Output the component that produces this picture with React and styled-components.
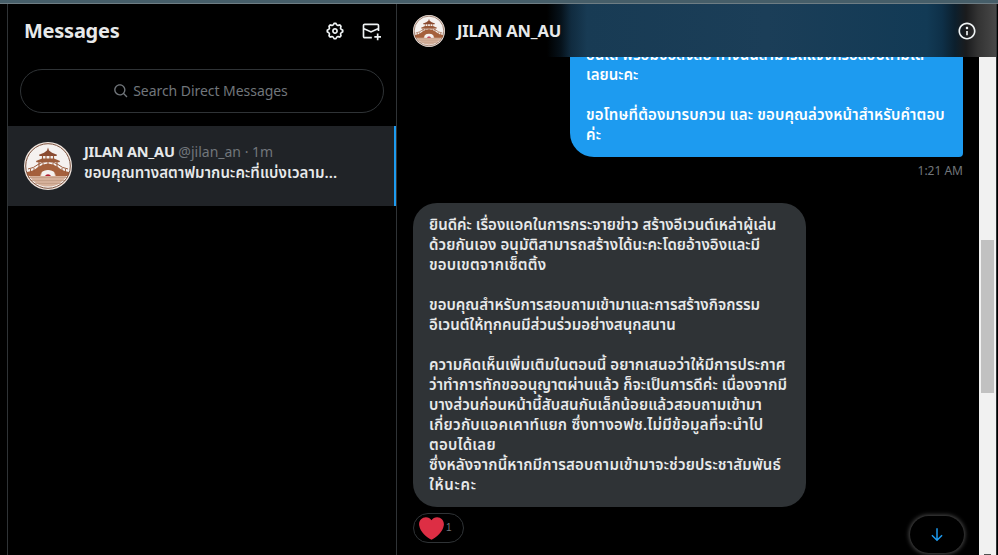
import React from "react";
import styled, { createGlobalStyle } from "styled-components";

const GlobalStyle = createGlobalStyle`
  * {
    box-sizing: border-box;
  }
  body {
    margin: 0;
    background: #000;
    color: #e7e9ea;
    font-family: "Noto Sans", "Noto Sans Thai", "Open Sans", sans-serif;
    font-size: 14px;
    line-height: 20px;
    overflow: hidden;
  }
`;

const Page = styled.div`
  width: 998px;
  height: 555px;
  display: flex;
  flex-direction: column;
  background: #000;
`;

const TopStrip = styled.div`
  height: 4px;
  flex-shrink: 0;
  background: #465e69;
  border-bottom: 1px solid #6e7d84;
`;

const Columns = styled.div`
  flex: 1;
  min-height: 0;
  display: flex;
  padding-left: 7px;
`;

const Sidebar = styled.aside`
  width: 390px;
  flex-shrink: 0;
  display: flex;
  flex-direction: column;
  border-left: 1px solid #2f3336;
  border-right: 1px solid #2f3336;
`;

const SidebarHeader = styled.header`
  height: 53px;
  display: flex;
  align-items: center;
  padding: 0 15px 0 16px;
`;

const Heading = styled.h2`
  flex: 1;
  margin: 0;
  font-size: ${({ $size }) => $size || 20}px;
  line-height: 24px;
  font-weight: 700;
  letter-spacing: ${({ $spacing }) => $spacing || 0}px;
`;

const HeaderIcons = styled.div`
  display: flex;
  gap: 16px;
`;

const Icon = styled.svg`
  width: ${({ $size }) => $size || 20}px;
  height: ${({ $size }) => $size || 20}px;
  flex-shrink: 0;
  display: block;
  fill: ${({ $color }) => $color || "#eff3f4"};
`;

const SearchBox = styled.div`
  height: 44px;
  margin: 12px 12px 13px 12px;
  display: flex;
  align-items: center;
  justify-content: center;
  gap: 4px;
  padding-right: 3px;
  border: 1px solid #2f3336;
  border-radius: 22px;
  letter-spacing: -0.05px;
  color: #71767b;
`;

const Conversation = styled.div`
  height: 80px;
  display: flex;
  gap: 12px;
  padding: 16px;
  background: #202327;
  border-right: 2px solid #1d9bf0;
`;

const ConversationText = styled.div`
  min-width: 0;
  margin-top: -1px;
  white-space: nowrap;
`;

const Name = styled.span`
  font-size: 14.5px;
  font-weight: 700;
  letter-spacing: -0.2px;
`;

const Muted = styled.span`
  color: #71767b;
`;

const Preview = styled.div`
  font-size: 15px;
  font-weight: 600;
  letter-spacing: 0.1px;
`;

const Chat = styled.main`
  flex: 1;
  min-width: 0;
  position: relative;
  display: flex;
  border-right: 1px solid #2f3336;
  margin-right: 1px;
`;

const ChatHeader = styled.header`
  position: absolute;
  top: 0;
  left: 0;
  right: 0;
  height: 53px;
  display: flex;
  align-items: center;
  gap: 12px;
  padding: 0 19px 0 16px;
  background: linear-gradient(
    90deg,
    #000 150px,
    #06121b 164px,
    #102b3f 174px,
    #183b54 190px,
    #1b3e58 370px,
    #123a55 530px,
    #0e3048 545px,
    #0c1f2d 558px,
    #1a1b1d 569px,
    #333 581px,
    #484848 599px
  );
`;

const Thread = styled.div`
  flex: 1;
  min-width: 0;
  overflow: hidden;
  display: flex;
  flex-direction: column;
  justify-content: flex-end;
  padding: 0 16px 12px;
`;

const Bubble = styled.div`
  width: 393px;
  flex-shrink: 0;
  align-self: ${({ $own }) => ($own ? "flex-end" : "flex-start")};
  padding: 11px 16px 13px;
  border-radius: ${({ $own }) => ($own ? "24px 24px 4px 24px" : "24px")};
  background: ${({ $own }) => ($own ? "#1d9bf0" : "#2f3336")};
  color: ${({ $own }) => ($own ? "#fff" : "#e7e9ea")};
  font-size: 15px;
  font-weight: 600;
`;

const Line = styled.div`
  height: 20px;
  white-space: nowrap;
  letter-spacing: ${({ $spacing }) => $spacing || 0}px;
`;

const Time = styled.div`
  flex-shrink: 0;
  height: 20px;
  margin: 4px 0 22px;
  text-align: right;
  font-size: 12px;
  color: #71767b;
`;

const Reaction = styled.div`
  flex-shrink: 0;
  width: 51px;
  height: 30px;
  margin-top: 6px;
  display: flex;
  align-items: center;
  gap: 2px;
  padding-left: 5px;
  border: 1px solid #2f3336;
  border-radius: 15px;
  font-family: "Liberation Sans", sans-serif;
  font-size: 10px;
  color: #71767b;
`;

const JumpButton = styled.button`
  position: absolute;
  right: 32px;
  bottom: 2px;
  width: 54px;
  height: 37px;
  padding: 0;
  display: flex;
  align-items: center;
  justify-content: center;
  border: none;
  border-radius: 19px;
  background: #000;
  box-shadow: 0 0 4px 1px rgba(255, 255, 255, 0.3);
`;

const ScrollTrack = styled.div`
  width: 17px;
  display: flex;
  flex-direction: column;
  justify-content: space-between;
  align-items: center;
  padding-top: 236px;
  background: #f1f1f1;
`;

const ScrollThumb = styled.div`
  width: 13px;
  height: 153px;
  background: #c1c1c1;
`;

const ScrollArrow = styled.div`
  width: 7px;
  height: 1px;
  background: #505050;
`;

const Avatar = ({ size }) => (
  <Icon $size={size} viewBox="0 0 48 48">
    <circle cx="24" cy="24" r="24" fill="#f0e6df" />
    <circle cx="24" cy="24" r="22" fill="#f5f1ef" />
    <path d="M4 31h40a21.500 21.500 0 0 1-40 0z" fill="#d5b09a" />
    <path d="M4.500 35.500h39M6.500 38.500h35M10 41.500h28" stroke="#bf9a84" strokeWidth=".8" />
    <path d="M3 33v-3q7-1 11-5 10-7 20 0 4 4 11 5v3l-2 1H32q-1-6-8-6t-8 6H5z" fill="#a5603c" />
    <path d="M4 27q6-1 10-4.500 10-6.500 20 0 4 3.500 10 4.500" fill="none" stroke="#9a5a3a" strokeWidth="1" />
    <path d="M6.500 27v4M10 26v4M38 26v4M41.500 27v4M19 21v3M24 20v3M29 21v3" stroke="#9a5a3a" strokeWidth=".9" />
    <path d="M17 34a7 5.500 0 0 1 14 0z" fill="#f5f1ef" />
    <path d="M21 34a3.200 2.600 0 0 1 6 0z" fill="#b01c30" />
    <path d="M24 5.500l1 3 3 2.200 5 2-.5 1.300h-17l-.5-1.300 5-2 3-2.200z" fill="#8a4a30" />
    <path d="M18 16.500h12l6 2.500-.5 1.200h-23L12 19z" fill="#9a5a3a" />
    <path d="M18.500 13.500v3.500M22 13.500v3.500M26 13.500v3.500M29.500 13.500v3.500M15 20v5M33 20v5" stroke="#9a5a3a" strokeWidth="1.100" />
    <circle cx="24" cy="24" r="22.300" fill="none" stroke="#7d5340" strokeWidth="1" />
  </Icon>
);

// the first rows sit above the visible part of the thread
const ownLines = [
  { text: "" },
  { text: "" },
  { text: "" },
  { text: "อื่นใด พร้อมข้อสงสัย ทางนั้นสามารถแจ้งหรือสอบถามได้" },
  { text: "เลยนะคะ" },
  { text: "" },
  { text: "ขอโทษที่ต้องมารบกวน และ ขอบคุณล่วงหน้าสำหรับคำตอบ", spacing: 0.14 },
  { text: "ค่ะ", spacing: 0.2 },
];

const replyLines = [
  { text: "ยินดีค่ะ เรื่องแอคในการกระจายข่าว สร้างอีเวนต์เหล่าผู้เล่น" },
  { text: "ด้วยกันเอง อนุมัติสามารถสร้างได้นะคะโดยอ้างอิงและมี", spacing: 0.08 },
  { text: "ขอบเขตจากเซ็ตติ้ง", spacing: 0.2 },
  { text: "" },
  { text: "ขอบคุณสำหรับการสอบถามเข้ามาและการสร้างกิจกรรม" },
  { text: "อีเวนต์ให้ทุกคนมีส่วนร่วมอย่างสนุกสนาน" },
  { text: "" },
  { text: "ความคิดเห็นเพิ่มเติมในตอนนี้ อยากเสนอว่าให้มีการประกาศ", spacing: 0.07 },
  { text: "ว่าทำการทักขออนุญาตผ่านแล้ว ก็จะเป็นการดีค่ะ เนื่องจากมี", spacing: 0.07 },
  { text: "บางส่วนก่อนหน้านี้สับสนกันเล็กน้อยแล้วสอบถามเข้ามา", spacing: 0.06 },
  { text: "เกี่ยวกับแอคเคาท์แยก ซึ่งทางอฟช.ไม่มีข้อมูลที่จะนำไป", spacing: 0.26 },
  { text: "ตอบได้เลย", spacing: 0.25 },
  { text: "ซึ่งหลังจากนี้หากมีการสอบถามเข้ามาจะช่วยประชาสัมพันธ์", spacing: 0.17 },
  { text: "ให้นะคะ", spacing: 0.7 },
];

const Message = ({ lines, own }) => (
  <Bubble $own={own}>
    {lines.map((line, index) => (
      <Line key={index} $spacing={line.spacing}>
        {line.text}
      </Line>
    ))}
  </Bubble>
);

const App = () => {
  return (
    <>
      <GlobalStyle />
      <Page>
        <TopStrip />
        <Columns>
          <Sidebar>
            <SidebarHeader>
              <Heading $spacing={-0.25}>Messages</Heading>
              <HeaderIcons>
                <Icon viewBox="0 0 24 24">
                  <path d="M10.540 1.750h2.920l1.570 2.360c.110.170.320.250.530.210l2.530-.590 2.170 2.170-.580 2.540c-.050.200.040.410.210.530l2.360 1.570v2.920l-2.360 1.570c-.170.120-.260.330-.210.530l.580 2.540-2.170 2.170-2.530-.590c-.210-.040-.420.040-.530.210l-1.570 2.360h-2.920l-1.580-2.360c-.110-.170-.320-.250-.520-.210l-2.540.590-2.170-2.170.580-2.540c.050-.200-.030-.410-.210-.530l-2.350-1.570v-2.920L4.100 8.970c.180-.120.260-.330.210-.530L3.730 5.900 5.900 3.730l2.540.590c.200.040.410-.040.520-.210l1.580-2.360zm1.070 2l-.980 1.470C10.050 6.080 9 6.500 7.990 6.270l-1.460-.340-.600.600.330 1.460c.240 1.010-.180 2.070-1.050 2.640l-1.460.980v.780l1.460.980c.870.570 1.290 1.630 1.050 2.640l-.330 1.460.600.600 1.460-.340c1.010-.230 2.060.190 2.640 1.050l.980 1.470h.780l.970-1.470c.580-.860 1.630-1.280 2.650-1.050l1.450.340.610-.600-.340-1.460c-.230-1.010.180-2.070 1.050-2.640l1.470-.980v-.780l-1.470-.980c-.870-.570-1.280-1.630-1.050-2.640l.340-1.460-.610-.600-1.450.340c-1.020.230-2.070-.190-2.650-1.050l-.970-1.470h-.780zM12 10.500c-.830 0-1.500.670-1.500 1.500s.670 1.500 1.500 1.500c.820 0 1.500-.670 1.500-1.500s-.680-1.500-1.500-1.500zM8.500 12c0-1.930 1.560-3.500 3.500-3.500 1.930 0 3.500 1.570 3.500 3.500s-1.570 3.500-3.500 3.500c-1.940 0-3.500-1.570-3.500-3.500z" />
                </Icon>
                <Icon viewBox="0 0 24 24">
                  <path d="M1.998 5.500c0-1.381 1.119-2.500 2.500-2.500h15c1.381 0 2.500 1.119 2.500 2.500V12h-2v-1.537l-8 3.635-8-3.635V18.500c0 .276.224.500.500.500H13v2H4.498c-1.381 0-2.500-1.119-2.500-2.500v-13zm2 2.766l8 3.635 8-3.635V5.500c0-.276-.224-.500-.500-.500h-15c-.276 0-.500.224-.500.500v2.766zM19 18v-3h2v3h3v2h-3v3h-2v-3h-3v-2h3z" />
                </Icon>
              </HeaderIcons>
            </SidebarHeader>
            <SearchBox>
              <Icon $size={16} $color="#71767b" viewBox="0 0 24 24">
                <path d="M10.250 3.750c-3.590 0-6.500 2.910-6.500 6.500s2.910 6.500 6.500 6.500c1.795 0 3.419-.726 4.596-1.904 1.178-1.177 1.904-2.801 1.904-4.596 0-3.590-2.910-6.500-6.500-6.500zm-8.500 6.500c0-4.694 3.806-8.500 8.500-8.500s8.500 3.806 8.500 8.500c0 1.986-.682 3.815-1.824 5.262l4.781 4.781-1.414 1.414-4.781-4.781c-1.447 1.142-3.276 1.824-5.262 1.824-4.694 0-8.500-3.806-8.500-8.500z" />
              </Icon>
              Search Direct Messages
            </SearchBox>
            <Conversation>
              <Avatar size={48} />
              <ConversationText>
                <Name>JILAN AN_AU</Name> <Muted>@jilan_an · 1m</Muted>
                <Preview>ขอบคุณทางสตาฟมากนะคะที่แบ่งเวลาม...</Preview>
              </ConversationText>
            </Conversation>
          </Sidebar>
          <Chat>
            <Thread>
              <Message own lines={ownLines} />
              <Time>1:21 AM</Time>
              <Message lines={replyLines} />
              <Reaction>
                <Icon $size={25} $color="#dd2e44" viewBox="0 0 36 36">
                  <path d="M35.885 11.833c0-5.450-4.418-9.868-9.867-9.868-3.308 0-6.227 1.633-8.018 4.129-1.791-2.496-4.710-4.129-8.017-4.129-5.450 0-9.868 4.417-9.868 9.868 0 .772.098 1.520.266 2.241C1.751 22.587 11.216 31.568 18 34.034c6.783-2.466 16.249-11.447 17.617-19.959.170-.721.268-1.469.268-2.242z" />
                </Icon>
                1
              </Reaction>
            </Thread>
            <ScrollTrack>
              <ScrollThumb />
              <ScrollArrow />
            </ScrollTrack>
            <ChatHeader>
              <Avatar size={32} />
              <Heading as="h3" $size={16.5} $spacing={-0.15}>
                JILAN AN_AU
              </Heading>
              <Icon viewBox="0 0 24 24">
                <path d="M13.500 8.500c0 .830-.670 1.500-1.500 1.500s-1.500-.670-1.500-1.500S11.170 7 12 7s1.500.670 1.500 1.500zM13 17v-5h-2v5h2zm-1 5.250c5.660 0 10.250-4.590 10.250-10.250S17.660 1.750 12 1.750 1.750 6.340 1.750 12 6.340 22.250 12 22.250zM20.250 12c0 4.560-3.690 8.250-8.250 8.250S3.750 16.560 3.750 12 7.440 3.750 12 3.750s8.250 3.690 8.250 8.250z" />
              </Icon>
            </ChatHeader>
            <JumpButton>
              <Icon $size={18} $color="#1d9bf0" viewBox="0 0 24 24">
                <path d="M13 3v13.590l5.043-5.050 1.414 1.420L12 20.410l-7.457-7.450 1.414-1.420L11 16.590V3h2z" />
              </Icon>
            </JumpButton>
          </Chat>
        </Columns>
      </Page>
    </>
  );
};

export default App;
